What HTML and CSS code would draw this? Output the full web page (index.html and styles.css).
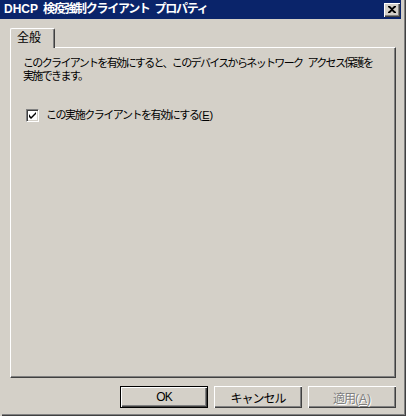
FILE: index.html
```html
<!DOCTYPE html>
<html lang="ja">
<head>
<meta charset="utf-8">
<title>DHCP 検疫強制クライアント プロパティ</title>
<link rel="stylesheet" href="styles.css">
</head>
<body>
<div class="window">
  <div class="titlebar">
    <span class="title"><span class="lat">DHCP</span><span class="sp"> </span>検疫強制クライアント<span class="sp"> </span>プロパティ</span>
    <span class="close"><svg width="8" height="7" viewBox="0 0 8 7"><path d="M0 0h2l2 2 2-2h2v1L5 3.5 8 6v1H6L4 5 2 7H0V6l3-2.5L0 1z" fill="#000"/></svg></span>
  </div>
  <div class="content">
    <div class="tabs">
      <div class="tab">全般</div>
    </div>
    <div class="panel">
      <p class="desc">このクライアントを有効にすると、このデバイスからネットワーク<span class="sp"> </span>アクセス保護を<br>実施できます。</p>
      <label class="check">
        <span class="box"><svg width="7" height="7" viewBox="0 0 7 7"><path d="M0 2v3l2 2 5-5V0L2 5z" fill="#000"/></svg></span>
        <span class="label">この実施クライアントを有効にする<span class="lat">(<u>E</u>)</span></span>
      </label>
    </div>
    <div class="buttons">
      <button class="btn default">OK</button>
      <button class="btn">キャンセル</button>
      <button class="btn disabled">適用<span class="lat">(<u>A</u>)</span></button>
    </div>
  </div>
</div>
</body>
</html>
```
FILE: styles.css
```css
html, body {
  margin: 0;
  padding: 0;
  background: #d4d0c8;
}
body {
  font-family: "Liberation Sans", "Noto Sans CJK JP", sans-serif;
  font-size: 12px;
  color: #000;
}
.window {
  width: 406px;
  height: 416px;
  box-sizing: border-box;
  background: #d4d0c8;
  display: flex;
  flex-direction: column;
  box-shadow: inset 1px 0 0 #d4d0c8, inset -1px -1px 0 #404040, inset -2px -2px 0 #808080;
  border-left: 1px solid #d4d0c8;
}
.titlebar {
  height: 19px;
  margin-left: -1px;
  margin-right: 5px;
  background: #0a246a;
  display: flex;
  align-items: center;
  justify-content: space-between;
  padding-left: 4px;
  flex: none;
}
.title {
  color: #fff;
  font-weight: bold;
  font-size: 12px;
  letter-spacing: -1.3px;
  white-space: nowrap;
  line-height: 19px;
}
.lat {
  letter-spacing: 0;
}
.sp {
  display: inline-block;
  width: 5px;
  letter-spacing: 0;
}
.close {
  width: 16px;
  height: 14px;
  box-sizing: border-box;
  background: #d4d0c8;
  margin-right: 1px;
  display: flex;
  align-items: center;
  justify-content: center;
  box-shadow: inset 1px 1px 0 #fff, inset -1px -1px 0 #404040, inset -2px -2px 0 #808080;
}
.content {
  flex: 1;
  display: flex;
  flex-direction: column;
  padding: 9px 0 0 9px;
}
.tabs {
  display: flex;
  height: 19px;
  position: relative;
  z-index: 1;
}
.tab {
  width: 45px;
  height: 20px;
  box-sizing: border-box;
  background: #d4d0c8;
  border-top: 1px solid #fff;
  border-left: 1px solid #fff;
  border-right: 1px solid #404040;
  box-shadow: inset -1px 0 0 #808080;
  border-top-left-radius: 2px;
  border-top-right-radius: 2px;
  padding-left: 6px;
  line-height: 18px;
  font-size: 12px;
}
.panel {
  width: 386px;
  height: 331px;
  box-sizing: border-box;
  border-top: 1px solid #fff;
  border-left: 1px solid #fff;
  border-right: 1px solid #404040;
  border-bottom: 1px solid #404040;
  box-shadow: inset -1px -1px 0 #808080;
  padding: 9px 0 0 12px;
  display: flex;
  flex-direction: column;
}
.desc {
  margin: 0;
  font-size: 11px;
  line-height: 13px;
  letter-spacing: -1.65px;
  white-space: nowrap;
}
.check {
  margin-top: 26px;
  margin-left: 3px;
  display: flex;
  align-items: center;
  gap: 7px;
}
.box {
  width: 13px;
  height: 13px;
  box-sizing: border-box;
  background: #fff;
  border-top: 1px solid #808080;
  border-left: 1px solid #808080;
  border-right: 1px solid #fff;
  border-bottom: 1px solid #fff;
  box-shadow: inset 1px 1px 0 #404040, inset -1px -1px 0 #d4d0c8;
  display: flex;
  align-items: center;
  justify-content: center;
}
.label {
  font-size: 11px;
  letter-spacing: -1.45px;
  line-height: 13px;
  white-space: nowrap;
}
.buttons {
  display: flex;
  justify-content: flex-end;
  gap: 6px;
  padding-right: 10px;
  margin-top: 8px;
}
.btn {
  width: 88px;
  height: 22px;
  box-sizing: border-box;
  background: #d4d0c8;
  font-family: "Liberation Sans", "Noto Sans CJK JP", sans-serif;
  font-size: 12px;
  color: #000;
  border: none;
  padding: 0;
  box-shadow: inset 1px 1px 0 #fff, inset -1px -1px 0 #404040, inset -2px -2px 0 #808080;
  letter-spacing: -1px;
}
.btn.default {
  border: 1px solid #000;
}
.btn.disabled {
  color: #808080;
  text-shadow: 1px 1px 0 #fff;
}
u {
  text-decoration: underline;
}
```
